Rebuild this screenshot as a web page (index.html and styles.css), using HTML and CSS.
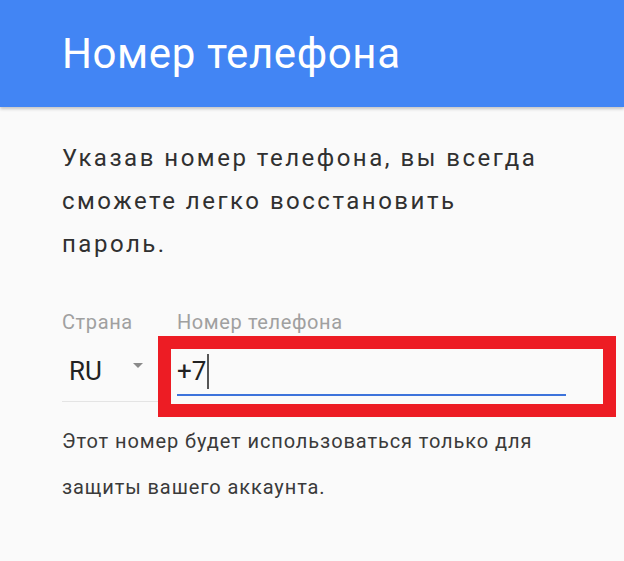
FILE: index.html
```html
<!DOCTYPE html>
<html lang="ru">
<head>
<meta charset="utf-8">
<title>Номер телефона</title>
<link rel="stylesheet" href="styles.css">
</head>
<body>
<header class="app-bar">
  <h1 class="app-title">Номер телефона</h1>
</header>
<main class="content">
  <p class="intro">Указав номер телефона, вы всегда сможете легко восстановить пароль.</p>
  <div class="fields">
    <div class="field country">
      <div class="label">Страна</div>
      <div class="country-input">
        <span class="country-code">RU</span>
        <span class="arrow"></span>
      </div>
    </div>
    <div class="field phone">
      <div class="label">Номер телефона</div>
      <div class="phone-input">
        <span class="phone-value">+7</span><span class="cursor"></span>
        <span class="highlight"></span>
      </div>
    </div>
  </div>
  <p class="helper">Этот номер будет использоваться только для защиты вашего аккаунта.</p>
</main>
</body>
</html>
```
FILE: styles.css
```css
html, body {
  margin: 0;
  padding: 0;
}
body {
  background: #fafafa;
  font-family: Roboto, "Noto Sans", "Liberation Sans", sans-serif;
  color: #333;
  width: 624px;
  height: 561px;
  overflow: hidden;
}
.app-bar {
  height: 107px;
  background: #4285f4;
  display: flex;
  align-items: center;
  padding-left: 62px;
  box-shadow: 0 2px 3px rgba(0, 0, 0, 0.22);
  position: relative;
}
.app-title {
  margin: 0;
  font-weight: 400;
  font-size: 42px;
  letter-spacing: 0.6px;
  color: #fff;
  line-height: 48px;
}
.content {
  padding: 0 0 0 62px;
}
.intro {
  margin: 30px 0 0;
  width: 490px;
  font-size: 24px;
  letter-spacing: 2.5px;
  line-height: 43px;
  color: #303030;
}
.fields {
  display: flex;
  margin-top: 44px;
  gap: 15px;
}
.label {
  font-size: 20px;
  letter-spacing: 0.6px;
  line-height: 24px;
  color: #a0a0a0;
  margin-bottom: 17px;
}
.country {
  width: 100px;
}
.country-input {
  display: flex;
  align-items: flex-start;
  gap: 31px;
  padding-left: 7px;
  height: 40px;
  padding-bottom: 10px;
  border-bottom: 1px solid #e4e4e4;
  box-sizing: content-box;
}
.country-code, .phone-value {
  font-size: 26px;
  line-height: 40px;
  color: #222;
}
.arrow {
  margin-top: 12px;
  width: 0;
  height: 0;
  border-left: 5px solid transparent;
  border-right: 5px solid transparent;
  border-top: 5px solid #8a8a8a;
}
.phone {
  width: 389px;
}
.phone-input {
  position: relative;
  height: 40px;
  padding-bottom: 3px;
  border-bottom: 2px solid #3d73db;
  display: flex;
  align-items: center;
}
.cursor {
  display: inline-block;
  width: 2px;
  height: 35px;
  background: #555;
  margin-left: 1px;
}
.highlight {
  position: absolute;
  left: -19px;
  top: -15px;
  width: 458px;
  height: 81px;
  box-sizing: border-box;
  border: 13px solid #ed1c24;
}
.helper {
  margin: 16px 0 0;
  width: 500px;
  font-size: 20px;
  letter-spacing: 0.9px;
  line-height: 46px;
  color: #3a3a3a;
}
```
